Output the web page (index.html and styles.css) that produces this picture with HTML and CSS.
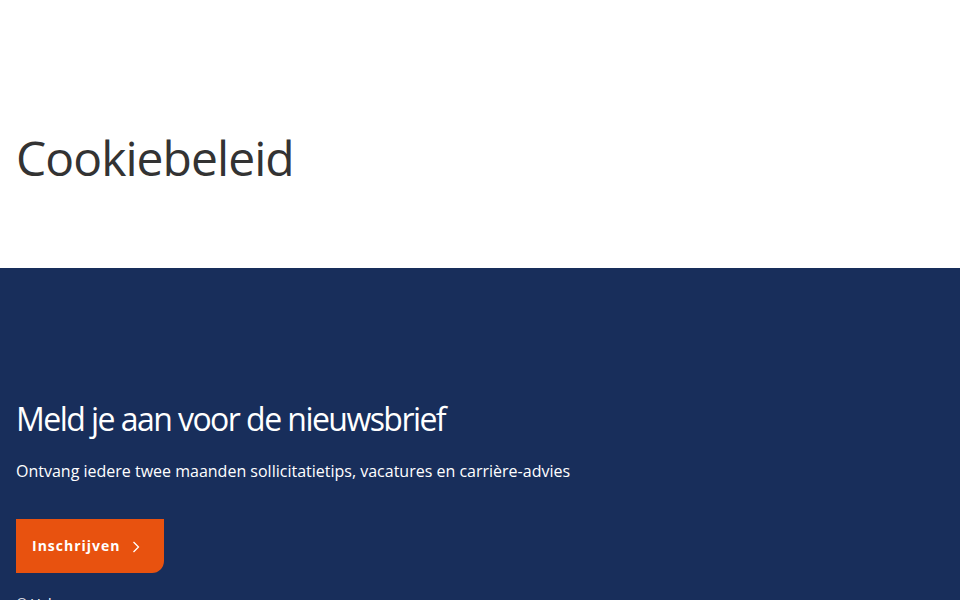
FILE: index.html
```html
<!DOCTYPE html>
<html lang="nl">
<head>
<meta charset="utf-8">
<title>Cookiebeleid</title>
<link rel="stylesheet" href="styles.css">
</head>
<body>
<header class="hero">
  <h1 class="title">Cookiebeleid</h1>
</header>
<footer class="footer">
  <h2 class="nl-title">Meld je aan voor de nieuwsbrief</h2>
  <p class="nl-text">Ontvang iedere twee maanden sollicitatietips, vacatures en carrière-advies</p>
  <a class="btn" href="#">Inschrijven
    <svg class="chev" width="8" height="12" viewBox="0 0 8 12"><path d="M1.5 1 L6.5 6 L1.5 11" fill="none" stroke="#fff" stroke-width="1.3"/></svg>
  </a>
  <p class="copy">© Volg ons</p>
</footer>
</body>
</html>
```
FILE: styles.css
```css
* { box-sizing: border-box; }
html, body { margin: 0; padding: 0; }
body { font-family: "Open Sans", "Liberation Sans", sans-serif; background: #fff; overflow: hidden; }
.hero { height: 268px; padding: 128px 16px 0; }
.title { margin: 0; font-size: 48px; font-weight: 400; color: #333; letter-spacing: -0.95px; line-height: 60px; }
.footer { background: #182e5b; color: #fff; padding: 130px 16px 40px; min-height: 400px; }
.nl-title { margin: 0; font-size: 32px; font-weight: 400; letter-spacing: -1.55px; line-height: 42px; }
.nl-text { margin: 19px 0 0; font-size: 16px; line-height: 24px; }
.btn { display: inline-flex; align-items: center; gap: 11px; margin-top: 36px; height: 54px; padding: 0 24px 0 16px; background: #e8520f; color: #fff; text-decoration: none; font-weight: 700; font-size: 14px; letter-spacing: 1px; border-radius: 0 0 12px 0; line-height: 20px; }
.btn .chev { margin-top: 1px; }
.copy { margin: 21px 0 0; font-size: 14px; line-height: 20px; }
```
